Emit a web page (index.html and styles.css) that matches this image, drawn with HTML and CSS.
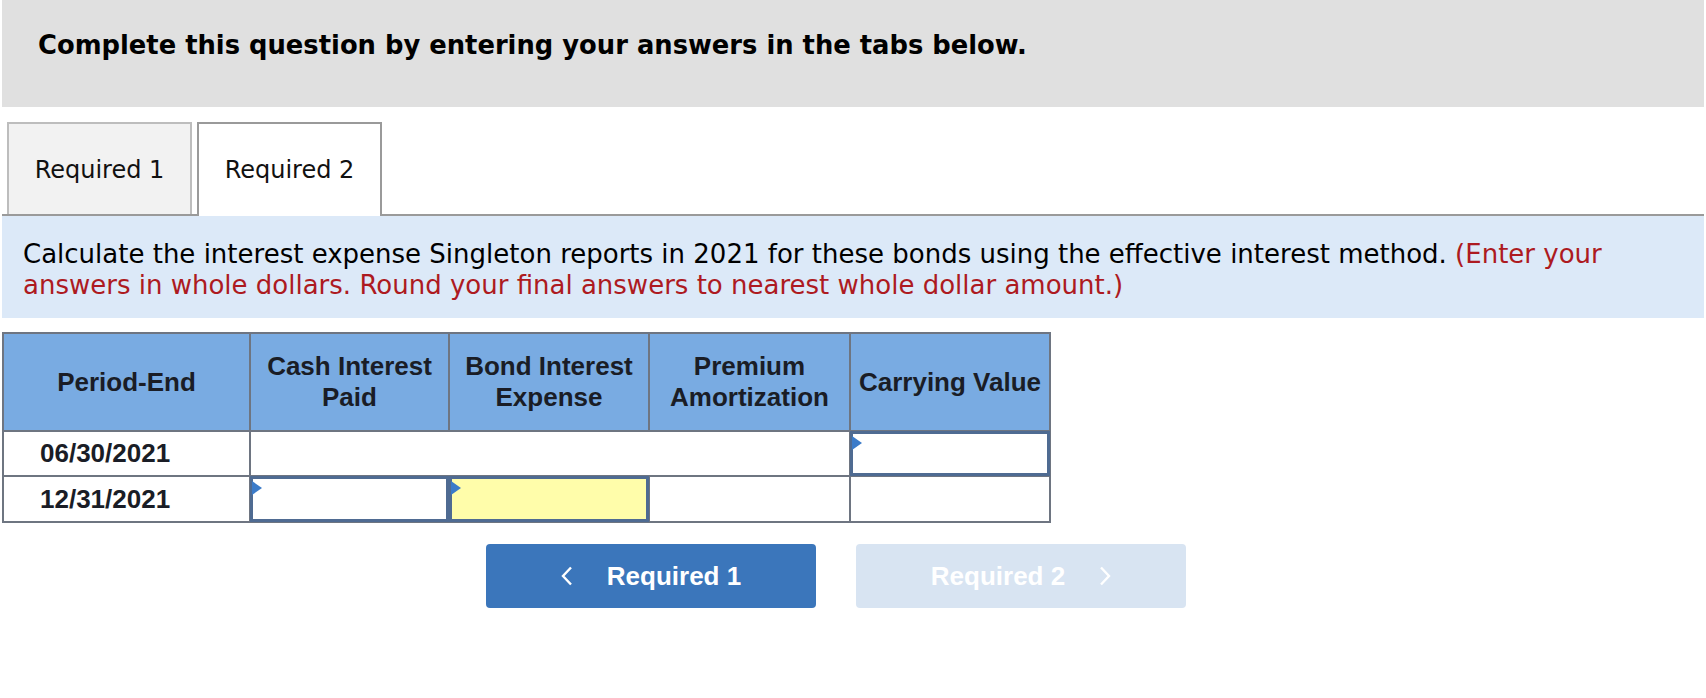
FILE: index.html
```html
<!DOCTYPE html>
<html lang="en">
<head>
<meta charset="utf-8">
<title>Required 2</title>
<link rel="stylesheet" href="styles.css">
</head>
<body>
<div class="page">
  <div class="prompt">Complete this question by entering your answers in the tabs below.</div>

  <div class="tabs">
    <div class="tab tab-inactive">Required 1</div>
    <div class="tab tab-active">Required 2</div>
  </div>

  <div class="instructions">
    Calculate the interest expense Singleton reports in 2021 for these bonds using the effective interest method. <span class="note">(Enter your answers in whole dollars. Round your final answers to nearest whole dollar amount.)</span>
  </div>

  <table class="grid">
    <colgroup>
      <col class="c1"><col class="c2"><col class="c3"><col class="c4"><col class="c5">
    </colgroup>
    <thead>
      <tr class="head-row">
        <th>Period-End</th>
        <th>Cash Interest<br>Paid</th>
        <th>Bond Interest<br>Expense</th>
        <th>Premium<br>Amortization</th>
        <th>Carrying Value</th>
      </tr>
    </thead>
    <tbody>
      <tr class="row1">
        <td class="date">06/30/2021</td>
        <td colspan="3"></td>
        <td class="in-cell"><div class="input"><span class="flag"></span></div></td>
      </tr>
      <tr class="row2">
        <td class="date">12/31/2021</td>
        <td class="in-cell"><div class="input"><span class="flag"></span></div></td>
        <td class="in-cell"><div class="input input-yellow"><span class="flag"></span></div></td>
        <td></td>
        <td></td>
      </tr>
    </tbody>
  </table>

  <div class="nav">
    <button class="btn btn-prev" type="button">
      <svg class="chev" width="12" height="20" viewBox="0 0 12 20"><polyline points="10,1.5 2,10 10,18.5" fill="none" stroke="#ffffff" stroke-width="2.4" stroke-linejoin="miter"/></svg>
      <span>Required 1</span>
    </button>
    <button class="btn btn-next" type="button" disabled>
      <span>Required 2</span>
      <svg class="chev" width="12" height="20" viewBox="0 0 12 20"><polyline points="2,1.5 10,10 2,18.5" fill="none" stroke="#ffffff" stroke-width="2.4" stroke-linejoin="miter"/></svg>
    </button>
  </div>
</div>
</body>
</html>
```

FILE: styles.css
```css
html, body {
  margin: 0;
  padding: 0;
  background: #ffffff;
}

.page {
  padding: 0 2px;
  font-family: "DejaVu Sans", Verdana, sans-serif;
  color: #000000;
}

.prompt {
  background: #e0e0e0;
  height: 107px;
  box-sizing: border-box;
  padding: 31px 36px 0;
  font-weight: bold;
  font-size: 25.8px;
  line-height: 28px;
  white-space: nowrap;
}

.tabs {
  display: flex;
  align-items: flex-end;
  gap: 5px;
  margin-top: 15px;
  padding-left: 5px;
  border-bottom: 2px solid #9a9a9a;
  height: 92px;
}

.tab {
  width: 185px;
  box-sizing: border-box;
  display: flex;
  align-items: center;
  justify-content: center;
  font-size: 24px;
  line-height: 28px;
  color: #111111;
  border: 2px solid #a8a8a8;
  border-bottom: none;
}

.tab-inactive {
  height: 92px;
  background: #f2f2f2;
  border-color: #bdbdbd;
  padding-top: 2px;
}

.tab-active {
  height: 94px;
  margin-bottom: -2px;
  background: #ffffff;
  border-color: #9a9a9a;
}

.instructions {
  background: #dce9f8;
  padding: 23px 21px 17px;
  font-size: 26px;
  line-height: 31px;
  color: #000000;
}

.note {
  color: #ad1a21;
}

.grid {
  margin-top: 14px;
  border-collapse: collapse;
  width: 1047px;
  table-layout: fixed;
  font-family: "Liberation Sans", Arial, sans-serif;
  font-weight: bold;
  font-size: 26px;
  color: #1a1d26;
}

.c1 { width: 247px; }
.c2 { width: 199px; }
.c3 { width: 200px; }
.c4 { width: 201px; }
.c5 { width: 200px; }

.grid th,
.grid td {
  border: 2px solid #6e7581;
  padding: 0;
}

.head-row {
  height: 98px;
}

.grid th {
  background: #79abe2;
  text-align: center;
  vertical-align: middle;
  line-height: 31px;
  font-weight: bold;
}

.row1 { height: 45px; }
.row2 { height: 46px; }

.grid td.date {
  padding-left: 36px;
  text-align: left;
  vertical-align: middle;
}

.in-cell {
  position: relative;
}

.input {
  position: absolute;
  left: -1px;
  right: -1px;
  top: -1px;
  bottom: -1px;
  box-sizing: border-box;
  border: 3px solid #4f6b92;
  background: #ffffff;
}

.input-yellow {
  background: #fffdaa;
}

.flag {
  position: absolute;
  left: -1px;
  top: 2px;
  width: 0;
  height: 0;
  border-left: 10px solid #3b7bc9;
  border-top: 7px solid transparent;
  border-bottom: 7px solid transparent;
}

.nav {
  display: flex;
  gap: 40px;
  margin-top: 21px;
  padding-left: 484px;
}

.btn {
  width: 330px;
  height: 64px;
  border: none;
  border-radius: 4px;
  display: flex;
  align-items: center;
  justify-content: center;
  gap: 34px;
  font-family: "Liberation Sans", Arial, sans-serif;
  font-weight: bold;
  font-size: 26px;
  color: #ffffff;
  padding: 0;
}

.btn-prev {
  background: #3b76bb;
}

.btn-next {
  background: #d8e4f2;
}

.chev {
  display: block;
}
```
